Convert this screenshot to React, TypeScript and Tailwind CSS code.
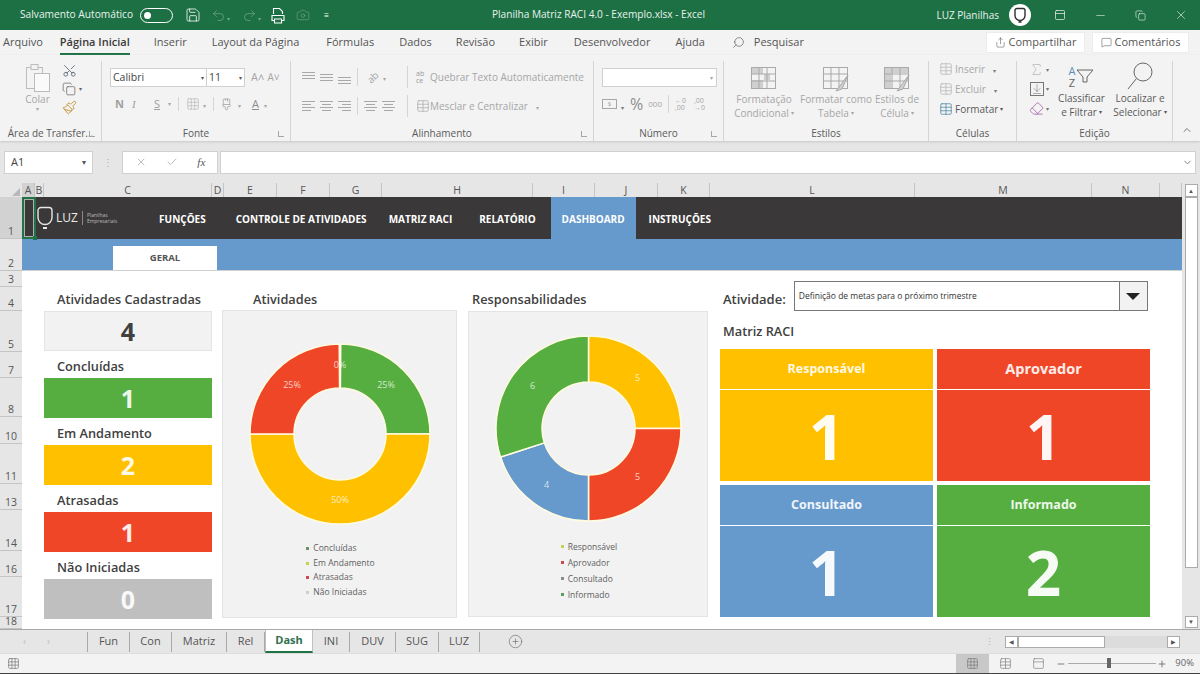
import React from "react";
import { Scissors, Copy, Paintbrush, Search, Share, MessageSquare, ChevronDown, ChevronUp, X, Check, Undo2, Redo2, Camera, Save, Sigma, Eraser, Minus, Plus, Copy as RestoreIcon, ArrowDownToLine, Grid3x3, Table, PanelTop, CirclePlus, Paintbrush2 } from "lucide-react";

const GREEN = "#55ae3f", YEL = "#ffc000", RED = "#f04628", BLUE = "#6699cc";
const cols = [
  { n: "A", c: "w-[13px] bg-[#d2d2d2]" }, { n: "B", c: "w-[9px]" }, { n: "C", c: "w-[168px]" }, { n: "D", c: "w-[12px]" }, { n: "E", c: "w-[53px]" }, { n: "F", c: "w-[53px]" }, { n: "G", c: "w-[52px]" }, { n: "H", c: "w-[151px]" }, { n: "I", c: "w-[62px]" }, { n: "J", c: "w-[63px]" }, { n: "K", c: "w-[52px]" }, { n: "L", c: "w-[205px]" }, { n: "M", c: "w-[177px]" }, { n: "N", c: "w-[68px]" }, { n: "", c: "flex-1" },
];
const rows = [
  { n: "1", c: "h-[42px] bg-[#d2d2d2]" }, { n: "2", c: "h-[32px]" }, { n: "3", c: "h-[16px]" }, { n: "4", c: "h-[24px]" }, { n: "5", c: "h-[41px]" }, { n: "7", c: "h-[26px]" }, { n: "8", c: "h-[40px]" }, { n: "10", c: "h-[27px]" }, { n: "11", c: "h-[40px]" }, { n: "13", c: "h-[26px]" }, { n: "14", c: "h-[41px]" }, { n: "16", c: "h-[26px]" }, { n: "17", c: "h-[40px]" }, { n: "18", c: "h-[12px]" },
];

function arc(cx: number, cy: number, R: number, r: number, a0: number, a1: number) {
  const p = (rad: number, a: number) => {
    const t = ((a - 90) * Math.PI) / 180;
    return `${(cx + rad * Math.cos(t)).toFixed(2)} ${(cy + rad * Math.sin(t)).toFixed(2)}`;
  };
  const large = a1 - a0 > 180 ? 1 : 0;
  return `M${p(R, a0)}A${R} ${R} 0 ${large} 1 ${p(R, a1)}L${p(r, a1)}A${r} ${r} 0 ${large} 0 ${p(r, a0)}Z`;
}

type Seg = { a: number; b: number; c: string };
type Lab = { x: number; y: number; t: string };
function Donut({ R, r, segs, labels }: { R: number; r: number; segs: Seg[]; labels: Lab[] }) {
  const s = R * 2 + 4;
  const c = s / 2;
  return (
    <svg width={s} height={s} viewBox={`0 0 ${s} ${s}`} className="shrink-0">
      {segs.map((g, i) => (
        <path key={i} d={arc(c, c, R, r, g.a, g.b)} fill={g.c} stroke="#fffbe0" strokeWidth="1.5" />
      ))}
      {labels.map((l, i) => (
        <text key={i} x={l.x + c} y={l.y + c} textAnchor="middle" dominantBaseline="middle" fontSize="9" fill="#fff" fillOpacity="0.75" fontFamily="'Open Sans', sans-serif">{l.t}</text>
      ))}
    </svg>
  );
}

function Lines({ kind }: { kind: "l" | "c" | "r" | "t" | "m" | "b" }) {
  const y0 = kind === "m" ? 3 : kind === "b" ? 6 : 1;
  const isV = kind === "t" || kind === "m" || kind === "b";
  const ys = isV ? [y0, y0 + 3, y0 + 6] : [1, 4, 7, 10];
  return (
    <svg width="15" height="13" viewBox="0 0 15 13" stroke="#a8a8a8" strokeWidth="1" className="shrink-0">
      {ys.map((y, i) => {
        const short = !isV && i % 2 === 1;
        const x1 = kind === "l" ? 1 : kind === "c" ? (short ? 3 : 1) : kind === "r" ? (short ? 5 : 1) : 1;
        const x2 = kind === "l" ? (short ? 10 : 14) : kind === "c" ? (short ? 12 : 14) : 14;
        return <line key={i} x1={x1} x2={x2} y1={y + 0.5} y2={y + 0.5} />;
      })}
    </svg>
  );
}

function Caret({ c = "text-[#a6a6a6]" }: { c?: string }) {
  return <span className={`text-[6px] leading-none ${c}`}>▾</span>;
}

function StyleIcon({ v }: { v: number }) {
  return (
    <svg width="30" height="28" viewBox="0 0 30 28" fill="none" stroke="#a9a9a9" strokeWidth="1">
      <rect x="2.5" y="2.5" width="24" height="21" fill="#f3f3f3" />
      {v === 0 && <path d="M3 3h11v6H3zM15 9h6v6h-6zM3 15h11v8H3z" fill="#cfcfcf" stroke="none" />}
      {v === 2 && <path d="M3 3h23v5H3zM3 8h6v15H3z" fill="#cfcfcf" stroke="none" />}
      <path d="M2.5 9h24M2.5 16h24M10 2.5v21M18 2.5v21" />
      {v > 0 && <path d="M27 10 L18 22 L15 26 L21 24 Z" fill="#cfcfcf" stroke="#a9a9a9" />}
    </svg>
  );
}

function Group({ w, label, launcher, children }: { w: string; label: string; launcher?: boolean; children: React.ReactNode }) {
  return (
    <div className={`${w} shrink-0 h-full flex flex-col border-r border-[#d4d4d4] relative`}>
      <div className="flex-1 min-h-0">{children}</div>
      <div className="h-[15px] text-center text-[10px] leading-[15px] text-[#5a5a5a]">{label}</div>
      {launcher && <span className="absolute right-[6px] bottom-[4px] w-[6px] h-[6px] border-l border-b border-[#a6a6a6]" />}
    </div>
  );
}

function StyleBtn({ v, a, b, w }: { v: number; a: string; b: string; w: string }) {
  return (
    <div className={`${w} flex flex-col items-center text-[10px] leading-[14px] text-[#a6a6a6] text-center whitespace-nowrap`}>
      <div className="h-[27px] flex items-center justify-center"><StyleIcon v={v} /></div>
      <div>{a}</div>
      <div className="flex items-center gap-[2px]">{b}<Caret /></div>
    </div>
  );
}

function Ribbon() {
  return (
    <div className="h-[86px] bg-[#f3f3f3] flex pt-[6px] shadow-[0_1px_2px_#c8c8c8] relative">
      <Group w="w-[102px]" label="Área de Transfer...  " launcher>
        <div className="flex pl-[24px] pt-[2px]">
          <div className="w-[27px] flex flex-col items-center">
            <svg width="26" height="30" viewBox="0 0 26 30" fill="#f3f3f3" stroke="#bcbcbc"><rect x="1.5" y="4.5" width="16" height="21" /><rect x="6" y="1.5" width="7" height="5" /><rect x="9.5" y="10.5" width="15" height="18" fill="#fafafa" /></svg>
            <div className="text-[10px] leading-[13px] text-[#a6a6a6]">Colar</div>
            <Caret />
          </div>
          <div className="ml-[11px] flex flex-col items-start gap-[4px]">
            <Scissors size={15} className="text-[#5d6b78] -rotate-90" strokeWidth={1.4} />
            <div className="flex items-center gap-[3px]"><Copy size={14} className="text-[#6a6a6a]" strokeWidth={1.3} /><Caret c="text-[#666]" /></div>
            <Paintbrush size={15} className="text-[#c99a45]" strokeWidth={1.6} />
          </div>
        </div>
      </Group>
      <Group w="w-[189px]" label="Fonte" launcher>
        <div className="pl-[8px] pt-[7px] flex flex-col">
          <div className="flex items-center">
            <div className="w-[97px] h-[19px] bg-white border border-[#d0d0d0] flex items-center justify-between px-[2px] text-[10.5px] text-[#444]">Calibri<Caret c="text-[#555]" /></div>
            <div className="w-[38px] h-[19px] bg-white border border-l-0 border-[#d0d0d0] flex items-center justify-between px-[2px] text-[10.5px] text-[#444]">11<Caret c="text-[#555]" /></div>
            <span className="ml-[6px] text-[11px] text-[#a6a6a6]">A˄</span>
            <span className="ml-[3px] text-[10px] text-[#a6a6a6]">A˅</span>
          </div>
          <div className="flex items-center mt-[9px] pl-[5px] text-[11px] text-[#a0a0a0] h-[16px]">
            <b className="w-[17px]">N</b><i className="w-[22px] font-['Liberation_Serif']">I</i><u className="w-[14px]">S</u><Caret />
            <span className="w-px h-[14px] bg-[#d4d4d4] mx-[7px]" />
            <Grid3x3 size={14} strokeWidth={1} className="text-[#b0b0b0]" /><span className="mx-[3px]"><Caret /></span>
            <span className="w-px h-[14px] bg-[#d4d4d4] mx-[4px]" />
            <Paintbrush2 size={13} className="ml-[2px] text-[#9a9a9a]" strokeWidth={1.3} /><span className="mx-[5px]"><Caret /></span>
            <u className="ml-[6px] text-[#8d8d8d]">A</u><span className="ml-[5px]"><Caret /></span>
          </div>
        </div>
      </Group>
      <Group w="w-[303px]" label="Alinhamento" launcher>
        <div className="pl-[10px] pt-[6px] flex flex-col text-[10px] text-[#a6a6a6]">
          <div className="flex items-center h-[20px]">
            <Lines kind="t" /><span className="w-[3px]" /><Lines kind="m" /><span className="w-[3px]" /><Lines kind="b" />
            <span className="w-px h-[18px] bg-[#d4d4d4] mx-[5px]" />
            <span className="w-[44px] flex items-center shrink-0"><span className="text-[10px] -rotate-45 ml-[4px]">ab</span><span className="ml-[4px]"><Caret /></span></span>
            <span className="w-px h-[22px] bg-[#d4d4d4] mr-[8px] shrink-0" />
            <span className="text-[7px] leading-[7px] w-[14px] shrink-0 text-[#999]">ab<br />ce</span>
            <span className="whitespace-nowrap">Quebrar Texto Automaticamente</span>
          </div>
          <div className="flex items-center h-[20px] mt-[9px]">
            <Lines kind="l" /><span className="w-[3px]" /><Lines kind="c" /><span className="w-[3px]" /><Lines kind="r" />
            <span className="w-px h-[18px] bg-[#d4d4d4] mx-[5px]" />
            <Lines kind="c" /><span className="w-[3px]" /><Lines kind="c" />
            <span className="w-px h-[22px] bg-[#d4d4d4] ml-[11px] mr-[8px] shrink-0" />
            <Table size={14} strokeWidth={1} className="text-[#999] shrink-0" />
            <span className="whitespace-nowrap">Mesclar e Centralizar</span><span className="ml-[8px]"><Caret /></span>
          </div>
        </div>
      </Group>
      <Group w="w-[130px]" label="Número" launcher>
        <div className="pl-[8px] pt-[7px] text-[#a6a6a6]">
          <div className="w-[115px] h-[19px] bg-white border border-[#d0d0d0] flex items-center justify-end pr-[3px]"><Caret /></div>
          <div className="flex items-center mt-[9px] h-[16px]">
            <span className="w-[15px] h-[10px] border border-[#a6a6a6] text-[6px] leading-[8px] text-center">$</span>
            <span className="ml-[4px]"><Caret c="text-[#777]" /></span>
            <span className="ml-[6px] text-[16px] leading-none text-[#8d8d8d]">%</span>
            <span className="ml-[5px] text-[8px]">000</span>
            <span className="w-px h-[18px] bg-[#d4d4d4] mx-[6px]" />
            <span className="text-[7px] leading-[7px]">←0<br />,00</span>
            <span className="ml-[8px] text-[7px] leading-[7px]">,00<br />→0</span>
          </div>
        </div>
      </Group>
      <Group w="w-[205px]" label="Estilos">
        <div className="flex pt-[4px] pl-[4px]">
          <StyleBtn v={0} a="Formatação" b="Condicional" w="w-[72px]" />
          <StyleBtn v={1} a="Formatar como" b="Tabela" w="w-[72px]" />
          <StyleBtn v={2} a="Estilos de" b="Célula" w="w-[50px]" />
        </div>
      </Group>
      <Group w="w-[88px]" label="Células">
        <div className="pl-[10px] pt-[1px] flex flex-col gap-[6px] text-[10px] leading-[14px] text-[#a6a6a6]">
          <div className="flex items-center gap-[2px]"><Table size={14} strokeWidth={1} />Inserir<span className="ml-[6px]"><Caret c="text-[#777]" /></span></div>
          <div className="flex items-center gap-[2px]"><Table size={14} strokeWidth={1} />Excluir<span className="ml-[6px]"><Caret c="text-[#777]" /></span></div>
          <div className="flex items-center gap-[2px] text-[#5a5a5a]"><Table size={14} strokeWidth={1.2} className="text-[#3f7f9e]" />Formatar<Caret c="text-[#555]" /></div>
        </div>
      </Group>
      <Group w="w-[156px]" label="Edição">
        <div className="flex pl-[10px] text-[10px] leading-[14px] text-[#5a5a5a] text-center">
          <div className="w-[24px] flex flex-col gap-[5px] items-center pt-[1px]">
            <div className="flex items-center gap-[2px]"><Sigma size={15} strokeWidth={1} className="text-[#a6a6a6]" /><Caret c="text-[#777]" /></div>
            <div className="flex items-center gap-[2px]"><ArrowDownToLine size={14} strokeWidth={1} className="border border-[#777] text-[#666]" /><Caret c="text-[#777]" /></div>
            <div className="flex items-center gap-[2px]"><Eraser size={15} strokeWidth={1.3} className="text-[#a560a5]" /><Caret c="text-[#777]" /></div>
          </div>
          <div className="w-[61px] flex flex-col items-center whitespace-nowrap">
            <div className="h-[30px] flex items-center justify-center text-[#666]">
              <span className="flex flex-col gap-[1px] mr-[1px] text-[11px] leading-[11px]"><span className="text-[#5e8fb6]">A</span><span className="text-[#666]">Z</span></span>
              <svg width="18" height="14" viewBox="0 0 18 14" fill="none" stroke="#666" className="shrink-0"><path d="M1 1h16l-6 7v5H7V8z" /></svg>
            </div>
            <div>Classificar</div>
            <div className="flex items-center gap-[2px]">e Filtrar<Caret c="text-[#555]" /></div>
          </div>
          <div className="w-[56px] flex flex-col items-center whitespace-nowrap">
            <div className="h-[30px] flex items-center justify-center"><svg width="28" height="30" viewBox="0 0 28 30" fill="none" stroke="#666" strokeWidth="1"><circle cx="17" cy="11" r="9" /><path d="M10.5 17.5 L2 28" /></svg></div>
            <div>Localizar e</div>
            <div className="flex items-center gap-[2px]">Selecionar<Caret c="text-[#555]" /></div>
          </div>
        </div>
      </Group>
      <div className="flex-1 flex items-end justify-center pb-[5px]"><ChevronUp size={12} className="text-[#777]" /></div>
    </div>
  );
}

function Stat({ label, value, c }: { label: string; value: string; c: string }) {
  return (
    <div className="w-[168px]">
      <div className="h-[27px] pl-[13px] pt-[7px] text-[12.75px] leading-[16px] font-semibold text-[#404040] whitespace-nowrap">{label}</div>
      <div className={`h-[40px] pt-[2px] flex items-center justify-center text-[25px] font-bold ${c}`}>{value}</div>
    </div>
  );
}

function Tile({ title, v, c, s }: { title: string; v: string; c: string; s: string }) {
  return (
    <div className="flex flex-col gap-px">
      <div className={`h-[40px] ${c} ${s} flex items-center justify-center font-bold text-white/90`}>{title}</div>
      <div className={`flex-1 ${c} flex items-center justify-center text-[62px] leading-none font-bold text-white/95`}>{v}</div>
    </div>
  );
}

function Legend({ items, c, lh }: { items: { c: string; t: string }[]; c: string; lh: string }) {
  return (
    <div className={`flex flex-col items-start text-[8.5px] text-[#5f5f5f] ${c}`}>
      {items.map((it) => (
        <div key={it.t} className={`flex items-center gap-[4px] whitespace-nowrap ${lh}`}>
          <span className={`w-[3px] h-[3px] ${it.c}`} />{it.t}
        </div>
      ))}
    </div>
  );
}

function SheetTab({ t, w }: { t: string; w: string }) {
  return <div className={`h-[20px] ${w} flex items-center justify-center border-r border-[#a8a8a8] text-[11px] text-[#555]`}>{t}</div>;
}

export default function App() {
  return (
    <div className="w-[1200px] h-[674px] overflow-hidden flex flex-col bg-[#e6e6e6] font-['Open_Sans',sans-serif] text-[#444]">
      {/* Title bar */}
      <div className="h-[30px] shrink-0 bg-[#1d7044] text-white flex items-center pl-[20px] relative">
        <span className="text-[10.2px] whitespace-nowrap text-[#e8f2ec]">Salvamento Automático</span>
        <span className="ml-[7px] w-[33px] h-[15px] rounded-full border border-white flex items-center pl-[3px]"><span className="w-[7px] h-[7px] rounded-full bg-white" /></span>
        <Save size={16} strokeWidth={1.2} className="ml-[12px]" />
        <Undo2 size={15} strokeWidth={1.2} className="ml-[10px] text-[#6fa687]" /><span className="ml-[1px]"><Caret c="text-[#6fa687]" /></span>
        <Redo2 size={15} strokeWidth={1.2} className="ml-[12px] text-[#6fa687]" /><span className="ml-[1px]"><Caret c="text-[#6fa687]" /></span>
        <svg width="14" height="17" viewBox="0 0 14 17" fill="none" stroke="#fff" strokeWidth="1.1" className="ml-[10px]"><path d="M2.5 7V1.5h6l3 3V7" /><path d="M1 8.5h12v5H1z" /><path d="M3.5 12h7v4h-7z" fill="#1d7044" /></svg>
        <Camera size={14} strokeWidth={1.1} className="ml-[11px] text-[#6fa687]" />
        <span className="ml-[14px] text-[8px] leading-none">≡</span>
        <span className="absolute left-[492px] top-[7px] text-[10.1px] leading-[15px] whitespace-nowrap text-[#e8f2ec]">Planilha Matriz RACI 4.0 - Exemplo.xlsx  -  Excel</span>
        <div className="ml-auto flex items-center pr-[12px]">
          <span className="text-[10px] whitespace-nowrap text-[#e8f2ec]">LUZ Planilhas</span>
          <span className="ml-[10px] w-[22px] h-[22px] rounded-full bg-white flex items-center justify-center">
            <svg width="12" height="16" viewBox="0 0 12 16" fill="none" stroke="#2f2f2f" strokeWidth="1.4"><path d="M3 1.5h6a2 2 0 0 1 2 2v5a5 5 0 0 1-10 0v-5a2 2 0 0 1 2-2zM4.5 15h3" /></svg>
          </span>
          <PanelTop size={12} strokeWidth={1.3} className="ml-[23px]" />
          <Minus size={13} strokeWidth={1} className="ml-[28px]" />
          <RestoreIcon size={11} strokeWidth={1.2} className="ml-[28px]" />
          <X size={14} strokeWidth={1} className="ml-[28px]" />
        </div>
      </div>
      {/* Tabs */}
      <div className="h-[25px] shrink-0 bg-[#f3f3f3] flex items-center pl-[3px] text-[11px] text-[#555] whitespace-nowrap relative">
        <span>Arquivo</span>
        <span className="ml-[17px] h-full flex items-center font-semibold text-[#3b3b3b] relative">Página Inicial<span className="absolute left-0 right-0 bottom-0 h-[2px] bg-[#1d7044]" /></span>
        <span className="ml-[24px]">Inserir</span>
        <span className="ml-[25px]">Layout da Página</span>
        <span className="ml-[27px]">Fórmulas</span>
        <span className="ml-[25px]">Dados</span>
        <span className="ml-[24px]">Revisão</span>
        <span className="ml-[24px]">Exibir</span>
        <span className="ml-[26px]">Desenvolvedor</span>
        <span className="ml-[25px]">Ajuda</span>
        <Search size={13} strokeWidth={1.2} className="ml-[27px] -scale-x-100" />
        <span className="ml-[9px]">Pesquisar</span>
        <div className="ml-auto flex items-center gap-[7px] pr-[11px]">
          <div className="w-[99px] h-[21px] bg-white flex items-center justify-center gap-[3px] border border-[#ececec] text-[11px]"><Share size={11} strokeWidth={1.2} />Compartilhar</div>
          <div className="w-[97px] h-[21px] bg-white flex items-center justify-center gap-[3px] border border-[#ececec] text-[11px]"><MessageSquare size={11} strokeWidth={1.2} />Comentários</div>
        </div>
      </div>
      <Ribbon />
      {/* Formula bar */}
      <div className="h-[42px] shrink-0 flex items-center px-[4px] gap-[2px]">
        <div className="w-[89px] h-[23px] bg-white border border-[#d0d0d0] flex items-center justify-between px-[6px] text-[11px]">A1<Caret c="text-[#555] text-[8px]" /></div>
        <span className="w-[25px] text-center text-[#b0b0b0] text-[10px] leading-none">⋮</span>
        <div className="w-[96px] h-[23px] bg-white border border-[#d0d0d0] flex items-center justify-around px-[2px]">
          <X size={12} className="text-[#bdbdbd]" /><Check size={12} className="text-[#bdbdbd]" /><i className="font-['Liberation_Serif'] text-[11px] text-[#555]">fx</i>
        </div>
        <div className="flex-1 h-[23px] bg-white border border-[#d0d0d0] flex items-center justify-end pr-[2px]"><ChevronDown size={11} className="text-[#777]" /></div>
      </div>
      {/* Sheet */}
      <div className="h-[447px] shrink-0 flex border-b border-[#a8a8a8]">
        <div className="flex-1 min-w-0 flex flex-col">
          <div className="h-[14px] shrink-0 flex">
            <div className="w-[22px] flex items-end justify-end pr-[2px] pb-[1px]"><span className="w-0 h-0 border-l-[8px] border-l-transparent border-b-[8px] border-b-[#b8b8b8]" /></div>
            {cols.map((c) => (
              <div key={c.n} className={`${c.c} border-r border-[#c4c4c4] text-center text-[10.5px] leading-[14px] text-[#555]`}>{c.n}</div>
            ))}
          </div>
          <div className="flex-1 min-h-0 flex relative">
            <div className="w-[22px] shrink-0 flex flex-col">
              {rows.map((r) => (
                <div key={r.n} className={`${r.c} border-b border-[#c4c4c4] flex items-end justify-center text-[10.5px] leading-[13px] text-[#555]`}>{r.n}</div>
              ))}
            </div>
            <span className="absolute left-[22px] top-0 w-[14px] h-[42px] border-2 border-[#217346] outline outline-1 outline-white/60 -outline-offset-3 z-10">
              <span className="absolute -right-[3px] -bottom-[3px] w-[4px] h-[4px] bg-[#217346]" />
            </span>
            <div className="flex-1 min-w-0 flex flex-col bg-white">
              <div className="h-[42px] shrink-0 bg-[#3a3838] flex items-center text-white text-[10px] font-bold whitespace-nowrap">
                <svg width="16" height="24" viewBox="0 0 16 24" fill="none" stroke="#e8e8e8" strokeWidth="1.4" className="ml-[15px]"><path d="M4 1.5h8a3 3 0 0 1 3 3v7a7 7 0 0 1-14 0v-7a3 3 0 0 1 3-3z" /><path d="M6 22h4" strokeWidth="2" /></svg>
                <span className="ml-[3px] text-[12px] font-normal text-[#eaeaea]">LUZ</span>
                <span className="ml-[4px] w-px h-[14px] bg-[#888]" />
                <span className="ml-[4px] text-[5px] leading-[6px] font-normal text-[#bbb]">Planilhas<br />Empresariais</span>
                <span className="ml-[42px] pt-[2px]">FUNÇÕES</span>
                <span className="ml-[30px] pt-[2px]">CONTROLE DE ATIVIDADES</span>
                <span className="ml-[22px] pt-[2px]">MATRIZ RACI</span>
                <span className="ml-[27px] pt-[2px]">RELATÓRIO</span>
                <span className="ml-[15px] pt-[2px] w-[85px] h-full bg-[#6699cc] flex items-center justify-center">DASHBOARD</span>
                <span className="ml-[13px] pt-[2px]">INSTRUÇÕES</span>
              </div>
              <div className="h-[32px] shrink-0 bg-[#6699cc] flex items-end border-b border-[#d0d0d0]">
                <div className="ml-[91px] w-[104px] h-[24px] pt-[1px] bg-white flex items-center justify-center text-[9.5px] font-bold text-[#555]">GERAL</div>
              </div>
              <div className="flex-1 min-h-0 flex pl-[22px] pt-[13px]">
                <div className="w-[168px] shrink-0">
                  <Stat label="Atividades Cadastradas" value="4" c="bg-[#f2f2f2] border border-[#e4e4e4] text-[#404040]" />
                  <Stat label="Concluídas" value="1" c="bg-[#55ae3f] text-white/90" />
                  <Stat label="Em Andamento" value="2" c="bg-[#ffc000] text-white/90" />
                  <Stat label="Atrasadas" value="1" c="bg-[#f04628] text-white/90" />
                  <Stat label="Não Iniciadas" value="0" c="bg-[#bfbfbf] text-white/90" />
                </div>
                <div className="ml-[10px] w-[235px] shrink-0 flex flex-col">
                  <div className="h-[26px] pl-[31px] pt-[7px] text-[12.75px] leading-[16px] font-semibold text-[#404040]">Atividades</div>
                  <div className="h-[308px] bg-[#f2f2f2] border border-[#e4e4e4] flex flex-col items-center pt-[31px]">
                    <Donut R={90} r={46} segs={[{ a: 0.5, b: 90, c: GREEN }, { a: 90, b: 270, c: YEL }, { a: 270, b: 359.5, c: RED }]} labels={[{ x: 46, y: -48, t: "25%" }, { x: 0, y: -68, t: "0%" }, { x: -48, y: -48, t: "25%" }, { x: 0, y: 67, t: "50%" }]} />
                    <Legend lh="leading-[14.7px]" c="mt-[15px] ml-[2px]" items={[{ c: "bg-[#6f8f6f]", t: "Concluídas" }, { c: "bg-[#c5d24f]", t: "Em Andamento" }, { c: "bg-[#d0484f]", t: "Atrasadas" }, { c: "bg-[#cfcfcf]", t: "Não Iniciadas" }]} />
                  </div>
                </div>
                <div className="ml-[11px] w-[240px] shrink-0 flex flex-col">
                  <div className="h-[27px] pl-[4px] pt-[7px] text-[12.75px] leading-[16px] font-semibold text-[#404040]">Responsabilidades</div>
                  <div className="h-[306px] bg-[#f2f2f2] border border-[#e4e4e4] flex flex-col items-center pt-[22px]">
                    <Donut R={92.5} r={46.5} segs={[{ a: 0, b: 90, c: YEL }, { a: 90, b: 180, c: RED }, { a: 180, b: 252, c: BLUE }, { a: 252, b: 360, c: GREEN }]} labels={[{ x: 49, y: -50, t: "5" }, { x: 49, y: 49, t: "5" }, { x: -42, y: 57, t: "4" }, { x: -56, y: -42, t: "6" }]} />
                    <Legend lh="leading-[15px]" c="mt-[16px] ml-[2px] gap-[1px]" items={[{ c: "bg-[#c5d24f]", t: "Responsável" }, { c: "bg-[#d0484f]", t: "Aprovador" }, { c: "bg-[#8c8c8c]", t: "Consultado" }, { c: "bg-[#5d9e5d]", t: "Informado" }]} />
                  </div>
                </div>
                <div className="ml-[12px] w-[430px] shrink-0 flex flex-col">
                  <div className="h-[27px] flex items-end">
                    <span className="ml-[3px] mb-[4px] text-[13px] leading-[16px] font-semibold text-[#404040]">Atividade:</span>
                    <div className="ml-[8px] w-[354px] h-[30px] -mt-[3px] border border-[#777] flex items-center text-[8.5px] text-[#333]">
                      <span className="pl-[4px] flex-1 whitespace-nowrap">Definição de metas para o próximo trimestre</span>
                      <span className="w-[28px] h-full border-l border-[#777] bg-[#f2f2f2] flex items-center justify-center"><span className="w-0 h-0 border-x-[7px] border-x-transparent border-t-[7px] border-t-[#222]" /></span>
                    </div>
                  </div>
                  <div className="h-[38px] pl-[3px] pt-[12px] text-[12.75px] leading-[16px] font-semibold text-[#404040]">Matriz RACI</div>
                  <div className="h-[268px] grid grid-cols-2 grid-rows-2 gap-[4px]">
                    <Tile title="Responsável" v="1" c="bg-[#ffc000]" s="text-[12.5px]" />
                    <Tile title="Aprovador" v="1" c="bg-[#f04628]" s="text-[14.5px]" />
                    <Tile title="Consultado" v="1" c="bg-[#6699cc]" s="text-[12.5px]" />
                    <Tile title="Informado" v="2" c="bg-[#55ae3f]" s="text-[12.5px]" />
                  </div>
                </div>
              </div>
            </div>
          </div>
        </div>
        {/* Vertical scrollbar */}
        <div className="w-[18px] shrink-0 flex flex-col items-center pt-[1px] pb-[1px] bg-[#e6e6e6]">
          <div className="w-[13px] h-[13px] bg-white border border-[#ababab] flex items-center justify-center text-[6px] leading-none text-[#555]">▲</div>
          <div className="w-[13px] flex-1 min-h-0 flex flex-col"><div className="h-[371px] bg-white border border-[#ababab]" /></div>
          <div className="w-[13px] h-[12px] bg-white border border-[#ababab] flex items-center justify-center text-[6px] leading-none text-[#555]">▼</div>
        </div>
      </div>
      {/* Sheet tabs */}
      <div className="h-[23px] shrink-0 flex items-center relative">
        <div className="w-[88px] h-[20px] flex items-center pl-[23px] gap-[21px] border-r border-[#a8a8a8] text-[10px] text-[#c0c0c0]"><span>‹</span><span>›</span></div>
        <SheetTab t="Fun" w="w-[42px]" /><SheetTab t="Con" w="w-[42px]" /><SheetTab t="Matriz" w="w-[55px]" /><SheetTab t="Rel" w="w-[38px]" />
        <div className="h-[23px] -mt-[1px] w-[48px] bg-white flex items-center justify-center border-b-2 border-[#217346] border-x border-x-[#c0c0c0] text-[11px] font-bold text-[#2f6f4e]">Dash</div>
        <SheetTab t="INI" w="w-[37px]" /><SheetTab t="DUV" w="w-[46px]" /><SheetTab t="SUG" w="w-[43px]" /><SheetTab t="LUZ" w="w-[41px]" />
        <CirclePlus size={15} strokeWidth={1} className="ml-[28px] text-[#666]" />
        <div className="ml-auto mr-[20px] flex items-center">
          <span className="mr-[11px] text-[9px] leading-none text-[#aaa]">⋮</span>
          <div className="w-[13px] h-[12px] bg-white border border-[#ababab] flex items-center justify-center text-[6px] leading-none text-[#555]">◀</div>
          <div className="w-[87px] h-[12px] bg-white border border-[#ababab]" />
          <div className="w-[62px] h-[12px] bg-[#dcdcdc]" />
          <div className="w-[13px] h-[12px] bg-white border border-[#ababab] flex items-center justify-center text-[6px] leading-none text-[#555]">▶</div>
        </div>
      </div>
      {/* Status bar */}
      <div className="flex-1 min-h-0 bg-[#f3f3f3] flex items-center pl-[7px] border-t border-[#dedede] border-b border-b-[#444]">
        <Grid3x3 size={13} strokeWidth={1.1} className="text-[#666]" />
        <div className="ml-auto flex items-center h-full pr-[6px]">
          <div className="w-[33px] h-full bg-[#c8c8c8] flex items-center justify-center"><Grid3x3 size={13} strokeWidth={1} className="text-[#666]" /></div>
          <div className="ml-[8px] w-[16px] flex justify-center"><Table size={13} strokeWidth={1} className="text-[#666]" /></div>
          <div className="ml-[17px] w-[16px] flex justify-center"><PanelTop size={13} strokeWidth={1} className="text-[#666]" /></div>
          <Minus size={10} className="ml-[10px] text-[#666]" strokeWidth={2} />
          <div className="ml-[2px] w-[88px] h-px bg-[#aaa] relative"><span className="absolute left-[39px] -top-[5px] w-[4px] h-[10px] bg-[#666]" /></div>
          <Plus size={10} className="ml-[1px] text-[#666]" strokeWidth={2} />
          <span className="ml-[8px] text-[9.5px] text-[#666]">90%</span>
        </div>
      </div>
    </div>
  );
}
